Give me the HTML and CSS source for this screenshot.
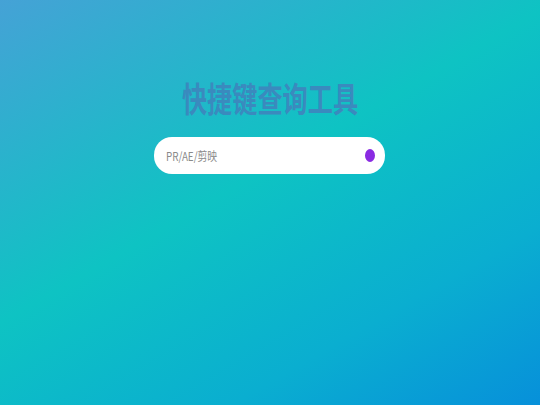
FILE: index.html
```html
<!DOCTYPE html>
<html lang="zh">
<head>
<meta charset="utf-8">
<link rel="stylesheet" href="styles.css">
</head>
<body>
<main class="page">
  <h1 class="title">快捷键查询工具</h1>
  <div class="search">
    <span class="placeholder">PR/AE/剪映</span>
    <span class="dot"></span>
  </div>
</main>
</body>
</html>
```
FILE: styles.css
```css
html, body {
  margin: 0;
  padding: 0;
  height: 100%;
}
body {
  background: linear-gradient(150deg, #45a2d6 0%, #0ec3c3 45%, #0aaed0 75%, #0790da 100%);
  font-family: "Noto Sans CJK SC", "Noto Sans", sans-serif;
  overflow: hidden;
}
.page {
  display: flex;
  flex-direction: column;
  align-items: center;
  padding-top: 78px;
}
.title {
  margin: 0 0 0 -1px;
  font-size: 34px;
  line-height: 40px;
  font-weight: 700;
  color: #3a8abe;
  transform: scaleX(0.74);
  white-space: nowrap;
}
.search {
  margin-top: 19px;
  margin-left: -1px;
  width: 231px;
  height: 37px;
  box-sizing: border-box;
  background: #fff;
  border-radius: 18px;
  display: flex;
  align-items: center;
  justify-content: space-between;
  padding: 0 10px 0 12px;
}
.placeholder {
  font-size: 12px;
  color: #8a8a8a;
  transform: scaleX(0.82);
  transform-origin: left center;
  white-space: nowrap;
}
.dot {
  width: 10px;
  height: 13px;
  border-radius: 50%;
  background: #8a2be2;
}
```
